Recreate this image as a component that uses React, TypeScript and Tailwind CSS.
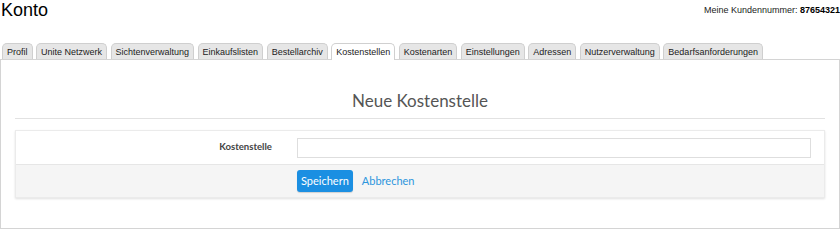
import React from "react";

const tabs = [
  "Profil",
  "Unite Netzwerk",
  "Sichtenverwaltung",
  "Einkaufslisten",
  "Bestellarchiv",
  "Kostenstellen",
  "Kostenarten",
  "Einstellungen",
  "Adressen",
  "Nutzerverwaltung",
  "Bedarfsanforderungen",
];

export default function App() {
  return (
    <div className="w-[840px] h-[230px] bg-white overflow-hidden font-['Liberation_Sans',Arial,sans-serif]">
      <div className="flex justify-between items-start">
        <div className="text-[18px] leading-[20px] text-black pl-[1px]">Konto</div>
        <div className="text-[9px] leading-[11px] mt-[5px] text-[#222] whitespace-nowrap">
          Meine Kundennummer: <span className="font-bold text-black">87654321</span>
        </div>
      </div>

      <div className="flex gap-[3.5px] pl-[2px] mt-[23px]">
        {tabs.map((t) => {
          const active = t === "Kostenstellen";
          return (
            <div
              key={t}
              className={
                active
                  ? "relative z-10 -mb-[1px] border border-b-0 border-[#d0d0d0] rounded-t-[5px] bg-white px-[4px] pt-[3px] pb-[2px] text-[9px] leading-[11px] text-[#222]"
                  : "border border-b-0 border-[#cfcfcf] rounded-t-[5px] bg-[#e6e6e6] px-[4px] pt-[3px] pb-[1px] text-[9px] leading-[11px] text-[#222]"
              }
            >
              {t}
            </div>
          );
        })}
      </div>

      <div className="h-[170px] border border-[#d4d4d4] px-[14px] font-['Lato','Open_Sans',sans-serif]">
        <div className="mt-[31px] text-center text-[17px] leading-[20px] text-[#555] font-normal">
          Neue Kostenstelle
        </div>
        <div className="mt-[7px] border-t border-[#e2e2e2]" />
        <div className="mt-[11px] border border-[#ebebeb] shadow-[0_1px_2px_rgba(0,0,0,0.12)] bg-white">
          <div className="flex items-center h-[33px]">
            <div className="w-[281px] pr-[25px] text-right text-[9.6px] font-bold text-[#444]">
              Kostenstelle
            </div>
            <div className="flex-1 mr-[13px]">
              <div className="h-[20px] border border-[#dedede] bg-white" />
            </div>
          </div>
          <div className="flex items-center h-[33px] bg-[#f5f5f5] border-t border-[#e6e6e6]">
            <div className="w-[281px]" />
            <button className="h-[22px] px-[4px] rounded-[3px] bg-[#1b8fe2] text-white text-[11px] leading-[22px] shadow-[0_1px_1px_rgba(0,0,0,0.15)]">
              Speichern
            </button>
            <a className="ml-[9px] text-[11px] text-[#2d96dd] cursor-pointer">Abbrechen</a>
          </div>
        </div>
      </div>
    </div>
  );
}
